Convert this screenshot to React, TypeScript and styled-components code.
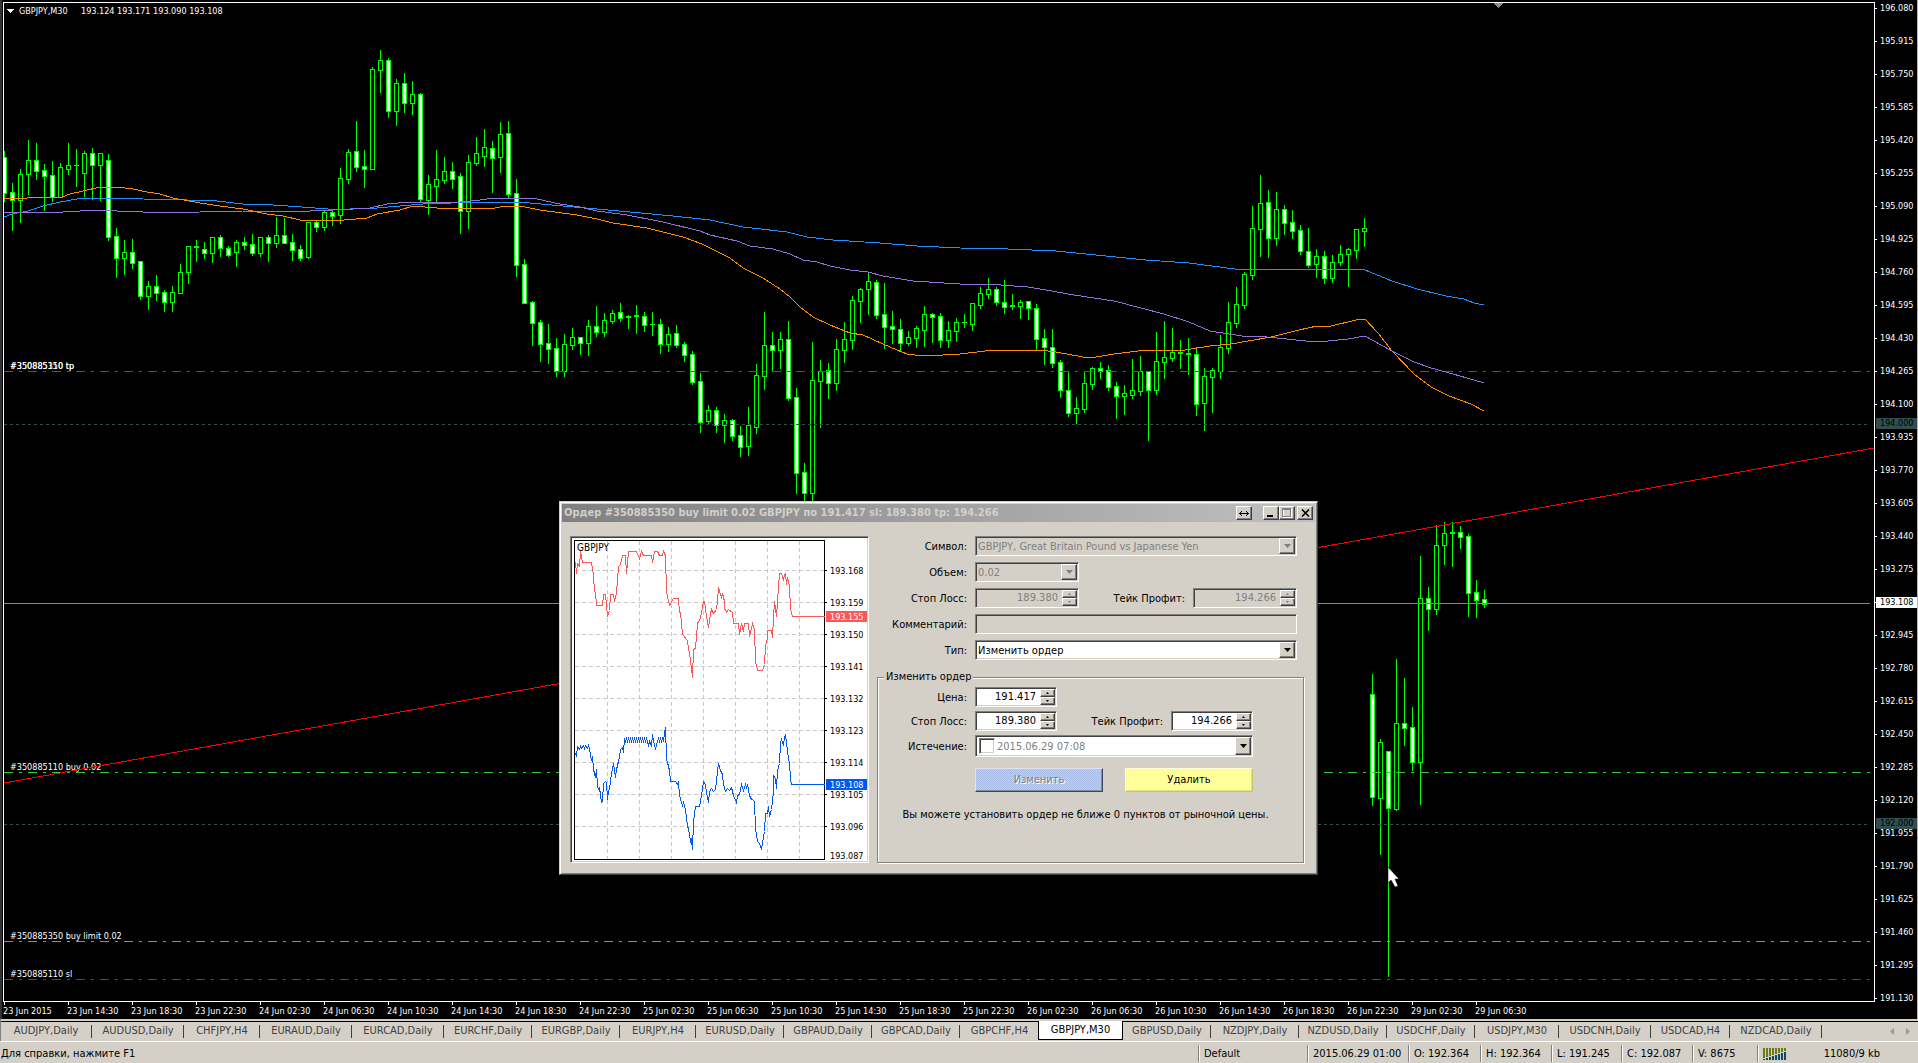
import React from "react";
import styled, { createGlobalStyle, css } from "styled-components";

const ui = `"DejaVu Sans Condensed", "DejaVu Sans", Tahoma, sans-serif`;
const face = "#d4d0c8";
const slate = "#2f4f4f";

const Global = createGlobalStyle`
  * { box-sizing: border-box; }
  body { margin: 0; background: ${face}; font: 11px/14px ${ui}; color: #000; }
  button, input, select { font: inherit; color: inherit; margin: 0; border-radius: 0; outline: none; }
`;

/* ---------- data ---------- */

// high, body top, body bottom, low, kind (u = hollow, d = filled, x = doji)
type Candle = [number, number, number, number, "u" | "d" | "x"];
const candles: Candle[] = [
  [151,157,193,201,"d"],[183,192,200,230,"d"],[169,174,200,222,"u"],[140,160,174,194,"u"],[143,160,171,179,"d"],
  [164,170,176,210,"d"],[161,175,197,201,"d"],[163,167,197,197,"u"],[143,165,169,174,"u"],[149,165,165,186,"x"],
  [151,153,173,196,"u"],[148,153,165,199,"d"],[153,153,165,200,"u"],[154,160,237,240,"d"],[228,236,258,277,"d"],
  [240,252,258,274,"u"],[239,252,263,268,"d"],[261,261,296,299,"d"],[281,286,296,309,"u"],[275,286,293,300,"d"],
  [290,292,302,311,"d"],[286,292,302,311,"u"],[264,272,293,293,"u"],[246,246,272,283,"u"],[240,246,247,261,"x"],
  [242,249,253,258,"d"],[237,237,253,262,"u"],[235,237,248,256,"d"],[246,248,255,256,"d"],[240,242,252,266,"u"],
  [237,242,245,249,"d"],[234,244,253,255,"d"],[237,237,253,256,"u"],[235,237,243,261,"d"],[217,235,243,247,"u"],
  [218,235,243,243,"d"],[234,242,250,260,"d"],[245,249,258,260,"d"],[222,222,257,258,"u"],[220,222,227,231,"d"],
  [210,212,227,230,"u"],[210,212,216,225,"d"],[168,178,215,223,"u"],[149,152,179,183,"u"],[121,151,167,171,"d"],
  [150,166,169,187,"d"],[67,69,169,169,"u"],[50,60,70,92,"u"],[58,60,111,117,"d"],[79,83,111,125,"u"],
  [73,83,103,112,"d"],[81,94,103,114,"u"],[93,94,199,201,"d"],[175,184,200,214,"u"],[150,179,186,203,"u"],
  [157,171,180,183,"u"],[162,171,179,188,"d"],[173,176,211,233,"d"],[155,162,211,228,"u"],[137,153,163,165,"u"],
  [129,147,156,166,"u"],[141,148,158,192,"d"],[122,134,157,172,"u"],[121,133,194,197,"d"],[179,193,265,276,"d"],
  [259,264,303,303,"d"],[301,302,323,345,"d"],[320,322,344,361,"d"],[324,343,349,363,"d"],[338,348,371,376,"d"],
  [334,344,371,376,"u"],[328,337,345,349,"u"],[337,337,343,354,"d"],[320,326,343,355,"u"],[306,326,332,336,"d"],
  [313,320,332,336,"u"],[310,313,321,323,"u"],[303,312,318,321,"d"],[315,316,317,328,"x"],[305,315,316,333,"x"],
  [312,316,325,331,"d"],[312,324,324,335,"x"],[319,324,344,353,"d"],[327,334,344,351,"u"],[325,333,345,347,"d"],
  [342,344,355,361,"d"],[351,354,382,384,"d"],[373,381,422,432,"d"],[405,410,421,423,"u"],[407,410,425,432,"d"],
  [414,420,425,442,"u"],[419,420,436,440,"d"],[426,435,447,456,"d"],[407,425,446,455,"u"],[364,375,427,433,"u"],
  [312,345,376,389,"u"],[332,345,350,370,"d"],[332,339,350,368,"u"],[321,339,398,400,"d"],[388,397,473,493,"d"],
  [463,472,493,505,"d"],[342,380,493,505,"u"],[360,371,381,427,"u"],[363,370,383,398,"d"],[339,349,383,390,"u"],
  [322,339,350,362,"u"],[296,300,340,349,"u"],[288,289,301,322,"u"],[273,281,289,314,"u"],[280,282,315,318,"d"],
  [283,314,327,348,"d"],[311,326,329,343,"d"],[319,329,343,351,"d"],[331,337,343,345,"u"],[326,328,338,347,"u"],
  [306,314,330,346,"u"],[313,314,317,342,"d"],[313,316,340,347,"d"],[321,330,340,347,"u"],[318,322,331,341,"u"],
  [314,322,322,327,"x"],[303,303,324,330,"u"],[287,293,305,308,"u"],[278,289,294,298,"u"],[287,289,302,305,"d"],
  [280,302,307,313,"d"],[294,305,306,309,"x"],[300,302,306,318,"u"],[301,301,308,319,"d"],[304,308,339,349,"d"],
  [329,338,347,364,"d"],[329,347,363,367,"d"],[360,362,390,397,"d"],[371,390,413,416,"d"],[397,408,413,423,"u"],
  [371,383,409,412,"u"],[367,368,384,389,"u"],[362,368,371,378,"d"],[365,370,387,390,"d"],[382,386,396,418,"d"],
  [385,393,396,414,"u"],[359,390,395,398,"u"],[356,371,391,395,"u"],[371,371,390,440,"d"],[332,361,390,394,"u"],
  [321,357,362,378,"u"],[328,352,358,361,"u"],[340,352,353,368,"x"],[338,353,354,374,"x"],[347,354,404,415,"d"],
  [368,376,403,430,"u"],[368,370,377,412,"u"],[335,347,371,378,"u"],[302,322,348,353,"u"],[287,304,323,327,"u"],
  [272,274,305,308,"u"],[206,228,275,279,"u"],[175,203,229,256,"u"],[190,202,238,257,"d"],[192,209,238,245,"u"],
  [205,209,223,234,"d"],[210,222,231,238,"d"],[225,230,251,254,"d"],[228,251,265,267,"d"],[249,256,264,277,"u"],
  [251,256,278,283,"d"],[255,262,278,282,"u"],[245,254,262,265,"u"],[248,249,254,286,"u"],[229,229,250,258,"u"],
  [218,228,231,246,"u"],[674,694,797,805,"d"],[739,742,798,854,"u"],[751,751,808,976,"d"],[659,723,809,810,"u"],
  [678,723,728,745,"d"],[707,727,762,770,"d"],[556,598,762,804,"u"],[587,598,609,630,"d"],[525,545,609,614,"u"],
  [522,533,545,564,"u"],[522,532,533,566,"x"],[526,532,537,548,"d"],[534,536,593,616,"d"],[580,592,600,617,"d"],
  [590,599,604,607,"d"],
];

const slowMa = "4,217 12,214 28,211 43,206 60,202 77,199 100,198 143,199 187,200 217,201 243,204 273,205 302,207 328,209 350,209 377,208 400,206 423,204 480,202 517,202 530,203 563,206 597,209 630,212 673,216 710,220 743,227 787,232 807,237 833,240 880,243 917,246 960,248 1008,249 1056,251 1096,255 1146,260 1189,263 1235,269 1344,269 1365,270 1392,281 1417,289 1446,296 1464,299 1474,303 1484,305";
const midMa = "4,212 63,212 80,211 100,210 117,211 143,212 163,213 200,212 243,211 310,211 333,210 353,209 370,208 387,204 410,202 460,202 480,200 495,198 520,198 537,199 560,204 580,207 597,211 627,215 663,222 700,231 710,235 737,241 750,246 773,249 790,254 803,260 817,262 830,266 850,270 868,272 883,276 913,281 960,284 987,284 1028,287 1046,290 1074,295 1114,301 1164,314 1189,322 1210,331 1242,336 1267,337 1306,341 1328,341 1348,339 1365,336 1390,350 1414,362 1431,368 1453,374 1467,378 1484,383";
const fastMa = "4,198 13,199 42,197 62,197 70,194 83,191 100,187 117,187 133,189 147,192 160,194 173,198 200,203 220,206 243,209 267,214 283,216 300,220 333,221 367,218 377,214 400,210 413,206 437,208 480,208 495,208 505,206 520,206 540,210 577,215 597,219 613,223 647,228 683,237 702,244 730,258 743,268 763,278 780,289 790,297 800,307 813,317 830,325 850,333 863,335 883,344 897,350 907,354 923,356 943,355 960,354 985,351 1003,350 1039,350 1056,352 1083,357 1096,357 1114,354 1146,350 1185,350 1210,346 1231,344 1271,337 1299,330 1317,326 1331,326 1356,320 1365,319 1378,333 1392,351 1414,374 1431,387 1449,396 1471,404 1484,411";

const prices = Array.from({ length: 31 }, (_, i) => (196.08 - i * 0.165).toFixed(3));

const times = [
  "23 Jun 2015",
  ...["14:30", "18:30", "22:30"].map((t) => `23 Jun ${t}`),
  ...[24, 25, 26].flatMap((d) => ["02:30", "06:30", "10:30", "14:30", "18:30", "22:30"].map((t) => `${d} Jun ${t}`)),
  "29 Jun 02:30",
  "29 Jun 06:30",
];

const tabs: [string, number][] = [
  ["AUDJPY,Daily", 92], ["AUDUSD,Daily", 92], ["CHFJPY,H4", 76], ["EURAUD,Daily", 92], ["EURCAD,Daily", 92],
  ["EURCHF,Daily", 88], ["EURGBP,Daily", 88], ["EURJPY,H4", 76], ["EURUSD,Daily", 88], ["GBPAUD,Daily", 88],
  ["GBPCAD,Daily", 88], ["GBPCHF,H4", 79], ["GBPJPY,M30", 85], ["GBPUSD,Daily", 88], ["NZDJPY,Daily", 88],
  ["NZDUSD,Daily", 88], ["USDCHF,Daily", 88], ["USDJPY,M30", 84], ["USDCNH,Daily", 92], ["USDCAD,H4", 79],
  ["NZDCAD,Daily", 92],
];
const activeTab = "GBPJPY,M30";

/* ---------- shell ---------- */

const Terminal = styled.div`
  display: flex;
  flex-direction: column;
  height: 100vh;
  min-width: 1340px;
  overflow: hidden;
`;

const ChartWindow = styled.main`
  position: relative;
  flex: 1;
  min-height: 0;
  display: grid;
  grid-template-columns: 1fr 43px;
  grid-template-rows: minmax(0, 1fr) 17px;
  padding: 2px 0 0 3px;
  background: #000;
  color: #fff;
  font-size: 9px;
  line-height: 11px;
  overflow: hidden;
  box-shadow: inset 2px 0 #303438;
`;

const Plot = styled.section`
  position: relative;
  border: 1px solid #fff;
  overflow: hidden;
  svg { display: block; width: 100%; height: 100%; }
  text { fill: #fff; font: 9px ${ui}; white-space: pre; }
`;

const PriceAxis = styled.ol`
  position: relative;
  grid-row: 1 / 3;
  grid-column: 2;
  list-style: none;
  margin: -10px 0 0;
  padding: 0;
  border-right: 1px solid #b8b4ac;
  height: calc(100% + 10px);
`;

const Price = styled.li<{ $current?: boolean }>`
  display: flex;
  align-items: center;
  height: 33px;
  &::before { content: ""; width: 2px; height: 1px; background: #fff; }
  span {
    flex: 1;
    padding-left: 3px;
    ${(p) => p.$current && css`background: #fff; color: #000; margin-left: -1px; padding-left: 4px;`}
  }
`;

const Level = styled.li<{ $y: number }>`
  position: absolute;
  top: ${(p) => p.$y}px;
  left: 1px;
  right: 0;
  padding-left: 4px;
  background: ${slate};
  color: #000;
`;

const TimeAxis = styled.ol`
  display: flex;
  list-style: none;
  margin: 0;
  padding: 0;
  overflow: hidden;
  li { flex: 0 0 64px; display: flex; flex-direction: column; white-space: nowrap; }
  li::before { content: ""; width: 1px; height: 3px; margin: 0 0 1px 1px; background: #fff; }
`;

const TabBar = styled.nav`
  display: flex;
  align-items: stretch;
  height: 23px;
  padding-top: 2px;
  border-bottom: 1px solid #fff;
  background: linear-gradient(#000, #000) 0 2px / 100% 1px no-repeat ${face};
  box-shadow: inset 1px 0 #808080;
`;

const Tab = styled.button<{ $w: number; $active: boolean }>`
  flex: 0 0 ${(p) => p.$w}px;
  padding: 0;
  margin: 1px 0;
  border: 0;
  background: linear-gradient(#404040, #404040) right center / 1px 13px no-repeat;
  color: #404040;
  text-align: center;
  white-space: nowrap;
  ${(p) => p.$active && css`
    margin: 0 0 1px -1px;
    background: #fff;
    color: #000;
    border: 1px solid #000;
    border-top: 0;
  `}
`;

const TabScroll = styled.div`
  margin-left: auto;
  display: flex;
  align-items: center;
  gap: 4px;
  padding-right: 4px;
  button { display: flex; padding: 4px; border: 0; background: none; }
`;

const StatusBar = styled.footer`
  display: flex;
  align-items: stretch;
  height: 21px;
  padding: 3px 0 1px;
  background: ${face};
`;

const Pane = styled.div<{ $w?: number }>`
  flex: ${(p) => (p.$w ? `0 0 ${p.$w}px` : "1")};
  display: flex;
  align-items: center;
  padding-left: 5px;
  white-space: nowrap;
  border-left: 1px solid #808080;
  box-shadow: inset 1px 0 #fff;
  &:first-child { border: 0; box-shadow: none; padding-left: 1px; }
`;

const Traffic = styled.span`
  flex: 1;
  padding-right: 38px;
  text-align: right;
`;

/* ---------- order dialog ---------- */

const sunken = css`
  border: 1px solid;
  border-color: #808080 #fff #fff #808080;
  box-shadow: inset 1px 1px #404040, inset -1px -1px ${face};
`;
const raised = css`
  border: 1px solid;
  border-color: #fff #404040 #404040 #fff;
  box-shadow: inset -1px -1px #808080;
  background: ${face};
`;

const Dialog = styled.section`
  position: absolute;
  left: 559px;
  top: 501px;
  width: 759px;
  padding: 2px;
  background: ${face};
  border: 1px solid;
  border-color: ${face} #404040 #404040 ${face};
  box-shadow: inset 1px 1px #fff, inset -1px -1px #808080;
  color: #000;
  font-size: 11px;
  line-height: 14px;
`;

const TitleBar = styled.header`
  display: flex;
  align-items: center;
  height: 18px;
  padding: 0 2px;
  background: linear-gradient(90deg, #808080, #c0c0c0);
  h1 { flex: 1; margin: 0; font: bold 11px/14px ${ui}; color: ${face}; white-space: nowrap; }
`;

const Caption = styled.button<{ $gap?: number }>`
  ${raised}
  display: flex;
  align-items: center;
  justify-content: center;
  width: 16px;
  height: 14px;
  padding: 0;
  margin-left: ${(p) => p.$gap ?? 0}px;
`;

const Body = styled.div`
  display: grid;
  grid-template-columns: 299px 1fr;
  gap: 8px;
  padding: 14px 10px 9px 8px;
`;

const TickChart = styled.div`
  ${sunken}
  height: 327px;
  padding: 1px;
  background: #fff;
  svg { display: block; width: 100%; height: 100%; }
  text { font: 9px ${ui}; }
`;

const ChartName = styled.text`
  && { font-size: 10px; }
`;

const Form = styled.form`
  display: flex;
  flex-direction: column;
  gap: 6px;
`;

const Row = styled.div<{ $inner?: boolean }>`
  display: grid;
  grid-template-columns: ${(p) => (p.$inner ? "89px 278px" : "90px 1fr")};
  gap: 8px;
  align-items: center;
  padding-right: ${(p) => (p.$inner ? 0 : 8)}px;
  label { text-align: right; padding-top: 2px; }
`;

const Pair = styled.div`
  display: flex;
  align-items: center;
  gap: 8px;
  > label { flex: 1; }
`;

const Box = styled.div<{ $w?: number; $off?: boolean; $tall?: boolean }>`
  ${sunken}
  display: flex;
  align-items: stretch;
  position: relative;
  width: ${(p) => (p.$w ? `${p.$w}px` : "100%")};
  height: ${(p) => (p.$tall ? 22 : 20)}px;
  padding: 1px;
  background: ${(p) => (p.$off ? face : "#fff")};
  color: ${(p) => (p.$off ? "#808080" : "#000")};
`;

const Select = styled.select`
  flex: 1;
  min-width: 0;
  appearance: none;
  border: 0;
  padding: 2px 18px 0 1px;
  background: none;
  opacity: 1;
`;

const Input = styled.input<{ $right?: boolean; $muted?: boolean }>`
  flex: 1;
  min-width: 0;
  width: 0;
  border: 0;
  padding: ${(p) => (p.$right ? "0 4px" : "1px 2px 0")};
  background: none;
  text-align: ${(p) => (p.$right ? "right" : "left")};
  ${(p) => p.$muted && css`color: #808080;`}
`;

const DropArrow = styled.span`
  ${raised}
  position: absolute;
  top: 1px;
  right: 1px;
  bottom: 1px;
  width: 16px;
  display: flex;
  align-items: center;
  justify-content: center;
  pointer-events: none;
`;

const Spinner = styled.div`
  display: grid;
  grid-template-rows: 1fr 1fr;
  width: 15px;
  button { ${raised} display: flex; align-items: center; justify-content: center; padding: 0; min-height: 0; }
`;

const Check = styled.input`
  ${sunken}
  appearance: none;
  width: 16px;
  height: 16px;
  align-self: center;
  margin-left: 2px;
  background: #fff;
`;

const Group = styled.fieldset`
  display: flex;
  flex-direction: column;
  gap: 4px;
  flex: 1;
  min-width: 0;
  margin: 4px 1px 0 0;
  padding: 3px 0 0;
  border: 1px solid #808080;
  box-shadow: 1px 1px #fff, inset 1px 1px #fff;
  legend { margin-left: 6px; padding: 0 2px; line-height: 14px; background: ${face}; }
  p { margin: 12px 0 0; text-align: center; white-space: nowrap; padding-right: 10px; }
`;

const Actions = styled.div`
  display: grid;
  grid-template-columns: 128px 128px;
  justify-content: space-between;
  width: 278px;
  margin: 7px 0 0 97px;
`;

const Action = styled.button<{ $tone: "blue" | "yellow" }>`
  height: 24px;
  padding: 0;
  border: 1px solid;
  ${(p) =>
    p.$tone === "blue"
      ? css`
          background: repeating-conic-gradient(#a9bde6 0 25%, #c3cde0 0 50%) 0 0 / 2px 2px;
          border-color: #dde4f2 #404858 #404858 #dde4f2;
          box-shadow: inset -1px -1px #7f8ca8;
          color: #808080;
          text-shadow: 1px 1px #fff;
        `
      : css`
          background: #ffff99;
          border-color: #ffffd8 #c4c46c #c4c46c #ffffd8;
          box-shadow: inset -1px -1px #e2e284;
        `}
`;

/* ---------- parts ---------- */

const Down = ({ color = "#000" }: { color?: string }) => (
  <svg width="7" height="4" aria-hidden="true"><path d="M0 0h7L3.5 4z" fill={color} /></svg>
);

function SpinBox({ id, value, width, off }: { id: string; value: string; width: number; off?: boolean }) {
  const color = off ? "#808080" : "#000";
  return (
    <Box $w={width} $off={off}>
      <Input id={id} defaultValue={value} disabled={off} $right $muted={off} />
      <Spinner>
        <button type="button" aria-label="Больше" disabled={off}>
          <svg width="3" height="2"><path d="M0 2h3L1.5 0z" fill={color} /></svg>
        </button>
        <button type="button" aria-label="Меньше" disabled={off}>
          <svg width="3" height="2"><path d="M0 0h3L1.5 2z" fill={color} /></svg>
        </button>
      </Spinner>
    </Box>
  );
}

function CandleMark({ i, data }: { i: number; data: Candle }) {
  const [high, top, bottom, low, kind] = data;
  const x = 4 + i * 8;
  return (
    <g>
      <rect x={x} y={high} width={1} height={low - high + 1} fill="#0f0" />
      <rect x={x - 2} y={top} width={5} height={bottom - top + 1} fill="#0f0" />
      {kind !== "x" && (
        <rect x={x - 1} y={top + 1} width={3} height={Math.max(1, bottom - top - 1)} fill={kind === "d" ? "#fff" : "#000"} />
      )}
    </g>
  );
}

const hLine = (y: number, color: string, dash?: string) => (
  <line x1={4} x2="100%" y1={y + 0.5} y2={y + 0.5} stroke={color} strokeDasharray={dash} />
);
const dashDot = "9 6 3 6";

function PriceChart() {
  return (
    <svg shapeRendering="crispEdges" role="img" aria-label="GBPJPY M30">
      <g transform="translate(-4 -3)">
        <text x={10} y={369}>#350885350 tp</text>
        <text x={10} y={369}>#350885110 tp</text>
        <text x={10} y={770}>#350885110 buy 0.02</text>
        <text x={10} y={939}>#350885350 buy limit 0.02</text>
        <text x={10} y={977}>#350885110 sl</text>
        {candles.map((c, i) => <CandleMark key={i} i={i} data={c} />)}
        {hLine(424, slate, "3 3")}
        {hLine(824, slate, "3 3")}
        {hLine(371, "#e01818", dashDot)}
        {hLine(772, "#32cd32", dashDot)}
        {hLine(941, "#32cd32", dashDot)}
        {hLine(979, "#f00", dashDot)}
        {hLine(603, "#778899")}
        <g fill="none">
          <polyline points={slowMa} stroke="#1e90ff" />
          <polyline points={midMa} stroke="#9370db" />
          <polyline points={fastMa} stroke="#ff8c00" />
          <path d="M4 783L1874 448" stroke="#f00" />
        </g>
        <path d="M7 9h7l-3.5 4z" fill="#fff" />
        <text x={19} y={14}>GBPJPY,M30</text>
        <text x={81} y={14}>193.124 193.171 193.090 193.108</text>
        <path d="M1494 3h9l-4.5 5z" fill="#8090a0" />
        <path d="M1388 867v16l3-3 4 7 3-1-3-7h4z" fill="#fff" stroke="#000" strokeWidth=".5" shapeRendering="auto" />
      </g>
    </svg>
  );
}

// Tick paths are recorded at three steps per pixel.
const toPixels = (path: string) =>
  path.split(" ").map((p) => p.split(",").map((n) => Math.floor(Number(n) / 3) + 0.5).join(",")).join(" ");

const ask = toPixels("60,202 64,236 68,204 72,214 76,170 82,202 110,202 114,240 118,290 122,292 125,331 143,331 146,298 151,298 157,364 162,345 166,298 174,298 179,320 184,292 190,214 196,208 202,181 211,181 215,236 220,170 244,170 252,191 258,170 265,181 289,181 292,202 297,170 306,170 312,181 322,181 326,170 331,181 334,288 344,331 354,310 370,310 374,353 377,352 383,418 396,436 399,462 404,472 412,548 416,464 421,460 428,386 436,370 439,352 445,320 449,320 453,363 460,396 466,354 470,343 474,354 484,343 487,320 490,278 498,308 501,296 508,320 508,343 512,343 515,353 521,343 531,353 535,386 550,386 553,418 559,386 564,408 568,386 579,386 582,425 592,386 597,402 602,500 607,526 622,526 627,508 630,452 638,430 638,406 648,406 651,428 655,363 659,320 663,363 668,320 674,236 680,236 684,256 688,238 692,236 694,268 697,246 702,274 706,342 711,364 808,364");
const ripple = (from: number, to: number) =>
  Array.from({ length: Math.floor((to - from) / 3) }, (_, i) => `${from + i * 3},${i % 2 ? 739 : 731}`).join(" ");
const bid = toPixels(`60,776 64,784 68,755 72,762 76,755 80,760 84,752 88,760 92,752 96,760 100,752 104,760 108,795 112,784 116,824 120,848 124,824 128,874 132,888 134,876 138,922 142,918 146,866 150,860 154,862 157,912 160,890 164,880 168,835 175,804 180,846 184,822 188,812 192,786 196,764 202,758 206,772 ${ripple(209, 279)} 280,752 284,740 288,750 292,718 296,740 302,760 307,738 ${ripple(309, 328)} 329,712 331,697 335,790 343,826 347,860 362,860 366,868 370,862 374,900 382,932 386,922 390,944 396,994 401,1000 405,1038 409,1034 412,1062 416,978 422,934 432,934 436,918 440,900 444,860 450,868 454,892 460,922 464,890 470,880 476,888 482,884 486,830 491,806 496,826 502,838 506,868 512,888 518,880 524,886 530,876 536,900 544,922 548,900 554,898 558,868 564,886 570,868 574,876 578,868 582,900 590,912 593,914 597,920 602,1000 608,1038 614,1046 620,1062 625,1024 629,1010 632,954 636,954 640,934 644,964 650,944 654,890 656,840 660,850 664,880 668,826 672,806 676,742 680,732 684,750 688,726 692,718 698,770 702,806 706,850 709,868 808,868`);

const tickLabels = ["193.168", "193.159", "193.150", "193.141", "193.132", "193.123", "193.114", "193.105", "193.096"];

function MiniChart() {
  return (
    <svg shapeRendering="crispEdges" role="img" aria-label="GBPJPY">
      <g transform="translate(-17 -43)">
        <g stroke="#c8c8c8" strokeDasharray="4 3">
          {[52, 84, 116, 148, 180, 212, 244].map((x) => <line key={x} x1={x + 0.5} x2={x + 0.5} y1={46} y2={364} />)}
          {tickLabels.map((t, i) => <line key={t} x1={20} x2={269} y1={75.5 + i * 32} y2={75.5 + i * 32} />)}
        </g>
        <rect x={19.5} y={45.5} width={250} height={319} fill="none" stroke="#000" />
        <polyline points={ask} fill="none" stroke="#f85858" />
        <polyline points={bid} fill="none" stroke="#0058f0" />
        <ChartName x={22} y={56}>GBPJPY</ChartName>
        {tickLabels.map((t, i) => (
          <React.Fragment key={t}>
            <rect x={270} y={75 + i * 32} width={2} height={1} />
            <text x={275} y={79 + i * 32}>{t}</text>
          </React.Fragment>
        ))}
        <text x={275} y={364}>193.087</text>
        <rect x={271} y={116} width={41} height={11} fill="#f85858" />
        <text x={275} y={125} fill="#fff">193.155</text>
        <rect x={271} y={284} width={41} height={11} fill="#0058f0" />
        <text x={275} y={293} fill="#fff">193.108</text>
      </g>
    </svg>
  );
}

function OrderDialog() {
  return (
    <Dialog role="dialog" aria-labelledby="order-title">
      <TitleBar>
        <h1 id="order-title">Ордер #350885350 buy limit 0.02 GBPJPY по 191.417 sl: 189.380 tp: 194.266</h1>
        <Caption aria-label="Ширина">
          <svg width="10" height="7"><path d="M0 3.5h10M3 1L.7 3.5 3 6M7 1l2.3 2.5L7 6" fill="none" stroke="#000" /></svg>
        </Caption>
        <Caption aria-label="Свернуть" $gap={11}>
          <svg width="8" height="8"><path d="M0 6h6v2H0z" /></svg>
        </Caption>
        <Caption aria-label="Развернуть">
          <svg width="10" height="10" shapeRendering="crispEdges">
            <path d="M1.5 1.5h8v8h-8z" fill="none" stroke="#fff" />
            <path d="M.5 .5h8v8h-8zM0 1.5h9" fill="none" stroke="#808080" />
          </svg>
        </Caption>
        <Caption aria-label="Закрыть" $gap={2}>
          <svg width="9" height="8"><path d="M1 .5l7 7M8 .5l-7 7" stroke="#000" strokeWidth="1.6" /></svg>
        </Caption>
      </TitleBar>
      <Body>
        <TickChart><MiniChart /></TickChart>
        <Form onSubmit={(e) => e.preventDefault()}>
          <Row>
            <label htmlFor="symbol">Символ:</label>
            <Box $off>
              <Select id="symbol" disabled><option>GBPJPY, Great Britain Pound vs Japanese Yen</option></Select>
              <DropArrow><Down color="#808080" /></DropArrow>
            </Box>
          </Row>
          <Row>
            <label htmlFor="volume">Объем:</label>
            <Box $off $w={104}>
              <Select id="volume" disabled><option>0.02</option></Select>
              <DropArrow><Down color="#808080" /></DropArrow>
            </Box>
          </Row>
          <Row>
            <label htmlFor="sl">Стоп Лосс:</label>
            <Pair>
              <SpinBox id="sl" value="189.380" width={104} off />
              <label htmlFor="tp">Тейк Профит:</label>
              <SpinBox id="tp" value="194.266" width={104} off />
            </Pair>
          </Row>
          <Row>
            <label htmlFor="comment">Комментарий:</label>
            <Box $off><Input id="comment" disabled /></Box>
          </Row>
          <Row>
            <label htmlFor="type">Тип:</label>
            <Box>
              <Select id="type"><option>Изменить ордер</option></Select>
              <DropArrow><Down /></DropArrow>
            </Box>
          </Row>
          <Group>
            <legend>Изменить ордер</legend>
            <Row $inner>
              <label htmlFor="price">Цена:</label>
              <SpinBox id="price" value="191.417" width={82} />
            </Row>
            <Row $inner>
              <label htmlFor="new-sl">Стоп Лосс:</label>
              <Pair>
                <SpinBox id="new-sl" value="189.380" width={82} />
                <label htmlFor="new-tp">Тейк Профит:</label>
                <SpinBox id="new-tp" value="194.266" width={82} />
              </Pair>
            </Row>
            <Row $inner>
              <label htmlFor="expiry">Истечение:</label>
              <Box $tall>
                <Check type="checkbox" aria-label="Истечение" />
                <Input id="expiry" defaultValue="2015.06.29 07:08" $muted />
                <DropArrow><Down /></DropArrow>
              </Box>
            </Row>
            <Actions>
              <Action type="button" $tone="blue" disabled>Изменить</Action>
              <Action type="button" $tone="yellow">Удалить</Action>
            </Actions>
            <p>Вы можете установить ордер не ближе 0 пунктов от рыночной цены.</p>
          </Group>
        </Form>
      </Body>
    </Dialog>
  );
}

const Signal = () => (
  <svg width="24" height="12" shapeRendering="crispEdges" aria-hidden="true">
    {Array.from({ length: 8 }, (_, i) => (
      <g key={i}>
        <rect x={i * 3} y={0} width={2} height={10 - i} fill="#6b7d10" />
        <rect x={i * 3} y={11 - i} width={2} height={1 + i} fill="#104868" />
      </g>
    ))}
  </svg>
);

export default function App() {
  return (
    <Terminal>
      <Global />
      <ChartWindow>
        <Plot><PriceChart /></Plot>
        <PriceAxis>
          {prices.map((p, i) => (
            <Price key={p} $current={i === 18}><span>{i === 18 ? "193.108" : p}</span></Price>
          ))}
          <Level $y={426}>194.000</Level>
          <Level $y={826}>192.000</Level>
        </PriceAxis>
        <TimeAxis>{times.map((t) => <li key={t}>{t}</li>)}</TimeAxis>
        <OrderDialog />
      </ChartWindow>
      <TabBar role="tablist">
        {tabs.map(([name, w]) => (
          <Tab key={name} role="tab" aria-selected={name === activeTab} $w={w} $active={name === activeTab}>{name}</Tab>
        ))}
        <TabScroll>
          <button aria-label="Назад"><svg width="4" height="7"><path d="M4 0v7L0 3.5z" fill="#999" /></svg></button>
          <button aria-label="Вперед"><svg width="4" height="7"><path d="M0 0v7L4 3.5z" fill="#999" /></svg></button>
        </TabScroll>
      </TabBar>
      <StatusBar>
        <Pane>Для справки, нажмите F1</Pane>
        <Pane $w={109}>Default</Pane>
        <Pane $w={101}>2015.06.29 01:00</Pane>
        <Pane $w={72}>O: 192.364</Pane>
        <Pane $w={71}>H: 192.364</Pane>
        <Pane $w={70}>L: 191.245</Pane>
        <Pane $w={71}>C: 192.087</Pane>
        <Pane $w={65}>V: 8675</Pane>
        <Pane $w={161}><Signal /><Traffic>11080/9 kb</Traffic></Pane>
      </StatusBar>
    </Terminal>
  );
}
